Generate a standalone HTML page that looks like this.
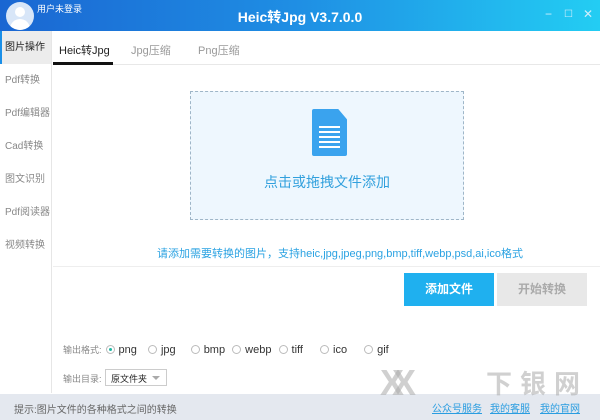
<!DOCTYPE html>
<html><head><meta charset="utf-8"><style>
*{margin:0;padding:0;box-sizing:border-box}
body{width:600px;height:420px;overflow:hidden;background:#fff;font-family:"Liberation Sans","Noto Sans CJK SC",sans-serif;position:relative}
.tb{position:absolute;left:0;top:0;width:600px;height:31px;background:linear-gradient(90deg,#1a66d2,#1f8fe4 50%,#23cdf3)}
.av{position:absolute;left:6px;top:2px;width:28px;height:28px;border-radius:50%;background:#d8e6f8;overflow:hidden}
.av:before{content:"";position:absolute;left:9px;top:5px;width:10px;height:10px;border-radius:50%;background:#fff}
.av:after{content:"";position:absolute;left:4px;top:17px;width:20px;height:14px;border-radius:10px 10px 0 0;background:#fff}
.ab{position:absolute;color:#fff;font-size:9px;left:37px;top:2px}
.title{position:absolute;left:0;width:600px;top:7px;text-align:center;color:#fff;font-weight:bold;font-size:14px}
.wc{position:absolute;top:7px;color:#cfeefc;font-size:12px}
.side{position:absolute;left:0;top:31px;width:52px;height:362px;border-right:1px solid #e6e6e6}
.si{height:33px;line-height:33px;font-size:10px;color:#888;padding-left:5px}
.si.a{background:#ececec;color:#222;border-left:2px solid #1a8fe8;padding-left:3px}
.tabs{position:absolute;left:53px;top:31px;width:547px;height:34px;border-bottom:1px solid #e8e8e8}
.tab{position:absolute;top:11px;font-size:11px;color:#999}
.tab.a{color:#222}
.ul{position:absolute;left:0;top:31px;width:60px;height:3px;background:#111}
.drop{position:absolute;left:190px;top:91px;width:274px;height:129px;background:#eef7fe;border:1px dashed #9fb6c8}
.doc{position:absolute;left:121px;top:17px;width:35px;height:47px;background:#3aa3ee;clip-path:polygon(0 0,75% 0,100% 22%,100% 100%,0 100%);border-radius:2px}
.doc i{position:absolute;left:7px;width:21px;height:2px;background:#fff}
.dt{position:absolute;left:0;width:272px;top:80px;text-align:center;color:#31a0dd;font-size:14px}
.hint{position:absolute;left:140px;width:400px;top:245px;text-align:center;color:#2aa2e2;font-size:11px}
.hl{position:absolute;left:53px;top:266px;width:547px;height:1px;background:#eee}
.btn{position:absolute;top:273px;width:90px;height:33px;line-height:33px;text-align:center;font-size:12px;font-weight:bold}
.opt{position:absolute;top:343px;font-size:11px;color:#333;left:63px;white-space:nowrap}
.opt .l{font-size:9px;color:#888}
.r{display:inline-block;width:9px;height:9px;border:1px solid #bbb;border-radius:50%;vertical-align:-1px;margin:0 4px 0 4px;position:relative}
.r.c:after{content:"";position:absolute;left:2px;top:2px;width:3px;height:3px;border-radius:50%;background:#1fb8a4}
.sel{position:absolute;left:105px;top:369px;width:62px;height:17px;border:1px solid #ccc;font-size:9px;color:#222;padding:2px 0 0 5px}
.sel:after{content:"";position:absolute;right:6px;top:6px;border:4px solid transparent;border-top-color:#aaa}
.foot{position:absolute;left:0;top:394px;width:600px;height:26px;background:#e4e8ef;font-size:10px;color:#666}
.wm{position:absolute;color:rgba(170,170,170,0.55);font-size:26px;font-weight:bold;z-index:5;white-space:nowrap}
</style></head><body>
<div class="tb"><div class="av"></div><div class="ab">用户未登录</div><div class="title">Heic转Jpg V3.7.0.0</div>
<div class="wc" style="left:545px">−</div><div class="wc" style="left:564px;font-size:10px;top:9px">☐</div><div class="wc" style="left:583px">✕</div></div>
<div class="side"><div class="si a">图片操作</div><div class="si">Pdf转换</div><div class="si">Pdf编辑器</div><div class="si">Cad转换</div><div class="si">图文识别</div><div class="si">Pdf阅读器</div><div class="si">视频转换</div></div>
<div class="tabs"><div class="ul"></div><div class="tab a" style="left:6px">Heic转Jpg</div><div class="tab" style="left:78px">Jpg压缩</div><div class="tab" style="left:145px">Png压缩</div></div>
<div class="drop"><div class="doc"><i style="top:17px"></i><i style="top:22px"></i><i style="top:27px"></i><i style="top:32px"></i><i style="top:37px"></i></div><div class="dt">点击或拖拽文件添加</div></div>
<div class="hint">请添加需要转换的图片，支持heic,jpg,jpeg,png,bmp,tiff,webp,psd,ai,ico格式</div>
<div class="hl"></div>
<div class="btn" style="left:404px;background:#1fb0ef;color:#fff">添加文件</div>
<div class="btn" style="left:497px;background:#e8e8e8;color:#aaa">开始转换</div>
<div class="opt"><span class="l">输出格式:</span><span class="r c"></span>png <span class="r" style="margin-left:8px"></span>jpg <span class="r" style="margin-left:12px"></span>bmp <span class="r"></span>webp <span class="r"></span>tiff <span class="r" style="margin-left:14px"></span>ico <span class="r" style="margin-left:14px"></span>gif</div>
<div class="opt" style="top:372px"><span class="l">输出目录:</span></div>
<div class="sel">原文件夹</div>
<div class="wm" style="left:380px;top:362px;font-size:36px;letter-spacing:-12px">XX</div>
<div class="wm" style="left:486px;top:364px;letter-spacing:8px">下银网</div>
<div class="foot"><span style="position:absolute;left:14px;top:7px">提示:图片文件的各种格式之间的转换</span>
<span style="position:absolute;left:432px;top:6px;color:#2a9de0;text-decoration:underline">公众号服务</span>
<span style="position:absolute;left:490px;top:6px;color:#2a9de0;text-decoration:underline">我的客服</span>
<span style="position:absolute;left:540px;top:6px;color:#2a9de0;text-decoration:underline">我的官网</span></div>
</body></html>
